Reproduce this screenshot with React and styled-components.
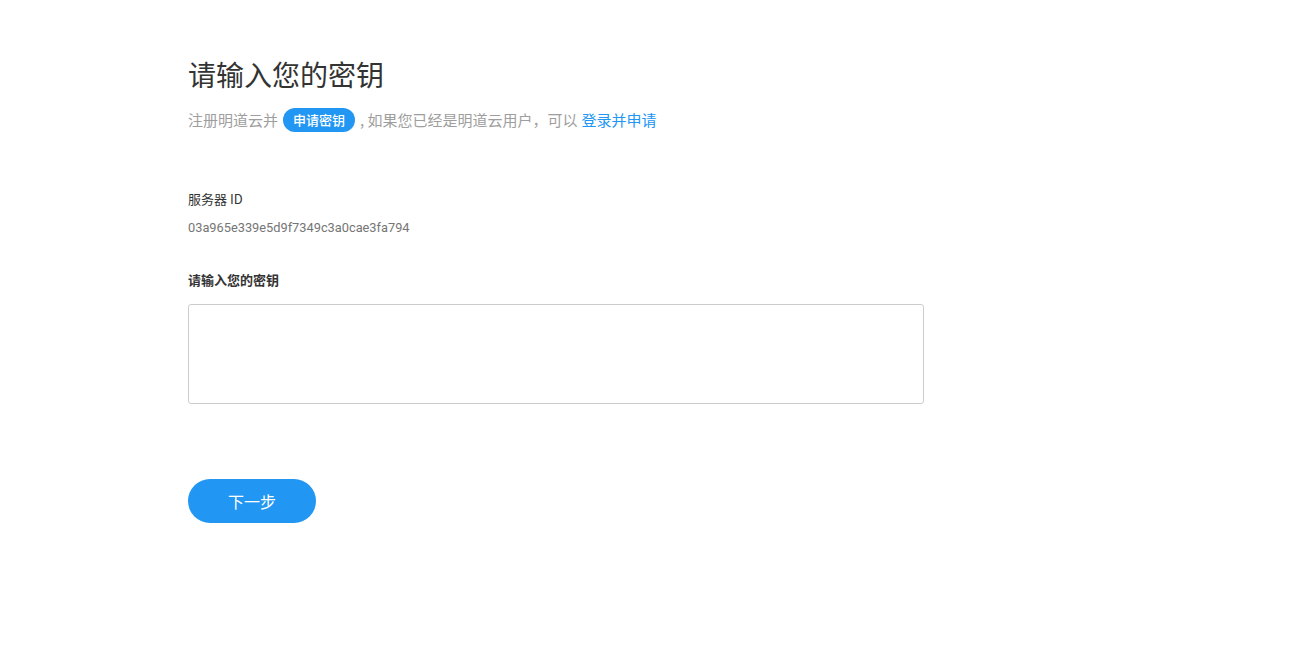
import React from "react";
import styled, { createGlobalStyle } from "styled-components";

const Global = createGlobalStyle`
  html, body { margin: 0; padding: 0; background: #fff; }
  body { font-family: "Noto Sans CJK SC", "Liberation Sans", sans-serif; }
  * { box-sizing: border-box; }
`;

const Page = styled.div`
  padding: 52px 0 0 188px;
  width: 1295px;
  min-height: 672px;
`;

const Title = styled.h1`
  margin: 0;
  font-size: 28px;
  font-weight: 400;
  line-height: 44px;
  color: #333;
`;

const Sub = styled.p`
  margin: 12px 0 0;
  font-size: 15px;
  color: #9e9e9e;
  display: flex;
  align-items: center;
  line-height: 24px;
`;

const Pill = styled.span`
  display: inline-flex;
  align-items: center;
  height: 24px;
  padding: 0 10px;
  margin: 0 5px;
  border-radius: 12px;
  background: #2196f3;
  color: #fff;
  font-size: 13px;
  font-weight: 500;
`;

const Link = styled.a`
  color: #2196f3;
  margin-left: 4px;
  text-decoration: none;
  font-weight: 400;
`;

const Field = styled.div`
  margin-top: ${(p) => p.$top}px;
`;

const Label = styled.div`
  font-size: 13px;
  line-height: 20px;
  color: #333;
  font-weight: ${(p) => (p.$bold ? 700 : 400)};
`;

const Value = styled.div`
  margin-top: 9px;
  font-size: 12.8px;
  line-height: 20px;
  color: #757575;
  font-family: "Roboto", "Liberation Sans", sans-serif;
`;

const TextArea = styled.textarea`
  display: block;
  margin-top: 14px;
  width: 736px;
  height: 100px;
  border: 1px solid #ccc;
  border-radius: 3px;
  resize: none;
  outline: none;
  padding: 8px 10px;
  font-size: 13px;
`;

const Button = styled.button`
  margin-top: 75px;
  width: 128px;
  height: 44px;
  border: none;
  border-radius: 22px;
  background: #2196f3;
  color: #fff;
  font-size: 16px;
  font-family: inherit;
  cursor: pointer;
`;

export default function App() {
  return (
    <>
      <Global />
      <Page>
        <Title>请输入您的密钥</Title>
        <Sub>
          注册明道云并<Pill>申请密钥</Pill>, 如果您已经是明道云用户，可以
          <Link href="#">登录并申请</Link>
        </Sub>
        <Field $top={57}>
          <Label>服务器 ID</Label>
          <Value>03a965e339e5d9f7349c3a0cae3fa794</Value>
        </Field>
        <Field $top={32}>
          <Label $bold>请输入您的密钥</Label>
          <TextArea />
        </Field>
        <Button>下一步</Button>
      </Page>
    </>
  );
}
